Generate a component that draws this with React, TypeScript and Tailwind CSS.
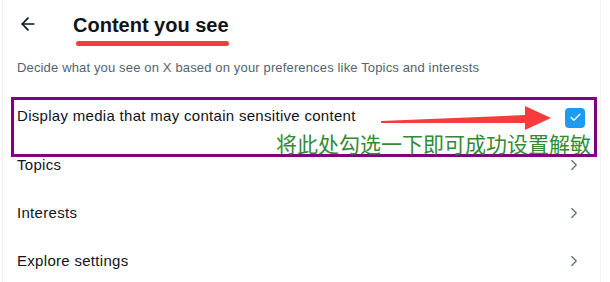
import { ArrowLeft, ChevronRight, Check } from "lucide-react"

const rows = ["Topics", "Interests", "Explore settings"]

export default function App() {
  return (
    <div className="h-[282px] w-[610px] overflow-hidden bg-white font-['Liberation_Sans',Roboto,sans-serif] text-[#0f1419]">
      <div className="relative ml-[2px] h-full w-[599px] border-x border-[#eff3f4]">
        {/* header */}
        <div className="flex h-[48px] items-center pl-[15px]">
          <ArrowLeft className="h-[20px] w-[20px]" strokeWidth={2} />
          <div className="relative ml-[35px] mt-[2px]">
            <h2 className="text-[20px] font-bold leading-[24px]">Content you see</h2>
            <div className="absolute left-[3px] top-[28px] h-[5px] w-[153px] rounded-full bg-[#fb3b3b]" />
          </div>
        </div>

        <p className="mt-[12px] pl-[14px] text-[13px] leading-[16px] tracking-[0.15px] text-[#536471]">
          Decide what you see on X based on your preferences like Topics and interests
        </p>

        {/* sensitive media row, annotated */}
        <div className="relative ml-[8px] mt-[21px] h-[60px] w-[586px] border-[3px] border-[#800080]">
          <div className="flex h-[33px] items-center justify-between pl-[3px] pr-[9px]">
            <span className="text-[15px] tracking-[0.3px]">Display media that may contain sensitive content</span>
            <span className="mt-[2px] flex h-[20px] w-[20px] items-center justify-center rounded-[4px] bg-[#1d9bf0]">
              <Check className="h-[13px] w-[13px] text-white" strokeWidth={2.5} />
            </span>
          </div>
          <div className="pr-[3px] text-right font-['Noto_Sans_CJK_SC',sans-serif] text-[21px] leading-[20px] text-[#338a33]">
            将此处勾选一下即可成功设置解敏
          </div>
          <svg
            className="absolute left-[367px] top-[4px]"
            width="172"
            height="28"
            viewBox="0 0 172 28"
          >
            <polygon points="0,17 144,11 144,2 170,14 144,26 144,19 0,19" fill="#f93b3b" />
          </svg>
        </div>

        <div className="-mt-[16px]">
          {rows.map((r) => (
            <div key={r} className="flex h-[48px] items-center justify-between pl-[14px] pr-[17px]">
              <span className="text-[15px] tracking-[0.3px]">{r}</span>
              <ChevronRight className="h-[18px] w-[18px] text-[#536471]" strokeWidth={1.5} />
            </div>
          ))}
        </div>
      </div>
    </div>
  )
}
